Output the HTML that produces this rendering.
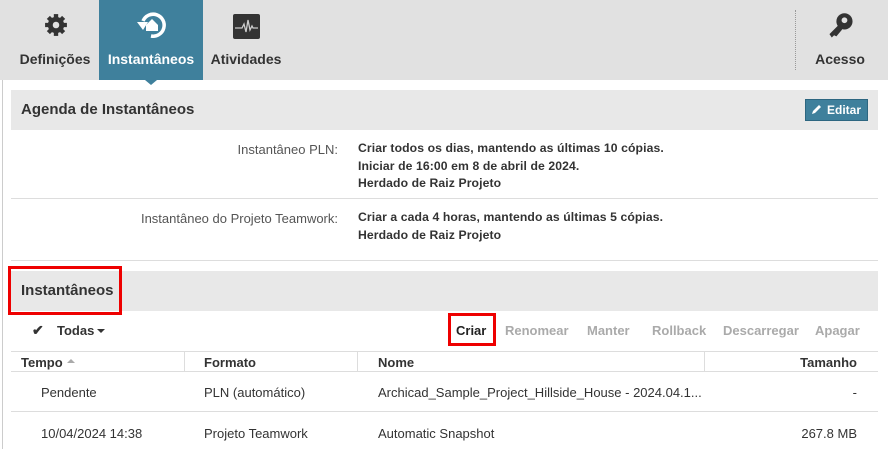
<!DOCTYPE html>
<html><head><meta charset="utf-8"><style>
*{margin:0;padding:0;box-sizing:border-box}
body{width:888px;height:449px;overflow:hidden;background:#fff;font-family:"Liberation Sans",sans-serif;color:#333;position:relative;font-size:13px}
.a{position:absolute;white-space:nowrap}
.b{font-weight:bold}
#nav{position:absolute;left:0;top:0;width:888px;height:80px;background:#e1e1e1}
.tab{position:absolute;top:0;height:80px;text-align:center;font-weight:bold;font-size:14px;color:#333}
.tab .l{position:absolute;left:0;right:0;top:51px}
.hdr{position:absolute;left:11px;width:867px;height:40px;background:#e8e8e8}
.hdr span{position:absolute;left:10px;top:11px;font-weight:bold;font-size:15px;color:#333}
.lbl{position:absolute;right:550px;color:#555}
.val{position:absolute;left:358px;font-weight:bold;font-size:12.2px;line-height:17.5px;letter-spacing:0.1px}
.hl{position:absolute;left:11px;width:867px;height:1px;background:#ddd}
.g{color:#aaa;font-weight:bold}
</style></head><body>
<div style="position:absolute;left:2px;top:80px;width:1px;height:369px;background:#ccc"></div>
<div id="nav">
 <div class="tab" style="left:11px;width:88px">
  <svg class="a" style="left:33px;top:13px" width="24" height="24" viewBox="0 0 22 22"><g fill="#333"><circle cx="11" cy="11" r="7.5"/><g stroke="#333" stroke-width="4"><line x1="11" y1="1" x2="11" y2="21"/><line x1="1" y1="11" x2="21" y2="11"/><line x1="4" y1="4" x2="18" y2="18"/><line x1="18" y1="4" x2="4" y2="18"/></g></g><circle cx="11" cy="11" r="3" fill="#e1e1e1"/></svg>
  <div class="l">Definições</div></div>
 <div class="tab" style="left:99px;width:104px;background:#3f809c;color:#fff">
  <svg class="a" style="left:35px;top:9px" width="34" height="32" viewBox="0 0 34 32"><path d="M9 12 A11 11 0 1 1 17 27" fill="none" stroke="#fff" stroke-width="3.5"/><path d="M3 13 L9 21 L14 13 Z" fill="#fff"/><path d="M12 16 L18 10 L24 16 L24 22 L12 22 Z" fill="#fff"/></svg>
  <div class="l">Instantâneos</div></div>
 <div class="a" style="left:145px;top:80px;width:0;height:0;border-left:6px solid transparent;border-right:6px solid transparent;border-top:5px solid #3f809c"></div>
 <div class="tab" style="left:206px;width:80px">
  <svg class="a" style="left:27px;top:14px" width="27" height="25" viewBox="0 0 27 25"><rect width="27" height="25" rx="2" fill="#333"/><path d="M2 14 H9 L11 10 L13 18 L15 6 L17 16 L19 12 L20 14 H25" fill="none" stroke="#ccc" stroke-width="1.3"/></svg>
  <div class="l">Atividades</div></div>
 <div class="a" style="left:795px;top:10px;height:60px;border-left:1px dotted #999"></div>
 <div class="tab" style="left:800px;width:80px">
  <svg class="a" style="left:26px;top:11px" width="30" height="30" viewBox="0 0 26 26"><circle cx="16" cy="9" r="7" fill="#333"/><circle cx="16" cy="8" r="2.5" fill="#e1e1e1"/><path d="M11 12 L3 20 L5 23 L7 21 L9 22 L14 16 Z" fill="#333"/></svg>
  <div class="l">Acesso</div></div>
</div>

<div class="hdr" style="top:90px"><span>Agenda de Instantâneos</span></div>
<div class="a b" style="left:805px;top:99px;width:63px;height:22px;background:#3f809c;border:1px solid #2d6680;color:#fff;font-size:12px;line-height:20px;padding-left:21px">Editar</div>
<svg class="a" style="left:811px;top:104px" width="11" height="11" viewBox="0 0 11 11"><path d="M1 10 L2 7 L8 1 L10 3 L4 9 Z" fill="#fff"/></svg>

<div class="lbl" style="top:142px">Instantâneo PLN:</div>
<div class="val" style="top:140px">Criar todos os dias, mantendo as últimas 10 cópias.<br>Iniciar de 16:00 em 8 de abril de 2024.<br>Herdado de Raiz Projeto</div>
<div class="hl" style="top:198px"></div>
<div class="lbl" style="top:211px">Instantâneo do Projeto Teamwork:</div>
<div class="val" style="top:209px">Criar a cada 4 horas, mantendo as últimas 5 cópias.<br>Herdado de Raiz Projeto</div>
<div class="hl" style="top:260px"></div>

<div class="hdr" style="top:271px"><span>Instantâneos</span></div>
<div class="a" style="left:8px;top:266px;width:114px;height:49px;border:3px solid #e00"></div>

<div class="a b" style="left:32px;top:322px;font-size:14px">✔</div>
<div class="a b" style="left:57px;top:323px">Todas</div>
<div class="a" style="left:97px;top:329px;border-left:4px solid transparent;border-right:4px solid transparent;border-top:4px solid #333"></div>
<div class="a b" style="left:456px;top:323px;color:#222">Criar</div>
<div class="a" style="left:448px;top:313px;width:48px;height:33px;border:3px solid #e00"></div>
<div class="a g" style="left:505px;top:323px">Renomear</div>
<div class="a g" style="left:587px;top:323px">Manter</div>
<div class="a g" style="left:652px;top:323px">Rollback</div>
<div class="a g" style="left:723px;top:323px">Descarregar</div>
<div class="a g" style="left:815px;top:323px">Apagar</div>

<div class="hl" style="top:351px"></div>
<div class="hl" style="top:371px"></div>
<div class="a" style="left:184px;top:352px;width:1px;height:19px;background:#ddd"></div>
<div class="a" style="left:357px;top:352px;width:1px;height:19px;background:#ddd"></div>
<div class="a" style="left:704px;top:352px;width:1px;height:19px;background:#ddd"></div>
<div class="a b" style="left:21px;top:355px">Tempo</div>
<div class="a" style="left:67px;top:359px;border-left:4px solid transparent;border-right:4px solid transparent;border-bottom:4px solid #aaa"></div>
<div class="a b" style="left:204px;top:355px">Formato</div>
<div class="a b" style="left:378px;top:355px">Nome</div>
<div class="a b" style="right:31px;top:355px">Tamanho</div>

<div class="a" style="left:41px;top:385px">Pendente</div>
<div class="a" style="left:204px;top:385px">PLN (automático)</div>
<div class="a" style="left:378px;top:385px">Archicad_Sample_Project_Hillside_House - 2024.04.1...</div>
<div class="a" style="right:31px;top:385px">-</div>
<div class="hl" style="top:411px"></div>
<div class="a" style="left:41px;top:426px">10/04/2024 14:38</div>
<div class="a" style="left:204px;top:426px">Projeto Teamwork</div>
<div class="a" style="left:378px;top:426px">Automatic Snapshot</div>
<div class="a" style="right:31px;top:426px">267.8 MB</div>
</body></html>
